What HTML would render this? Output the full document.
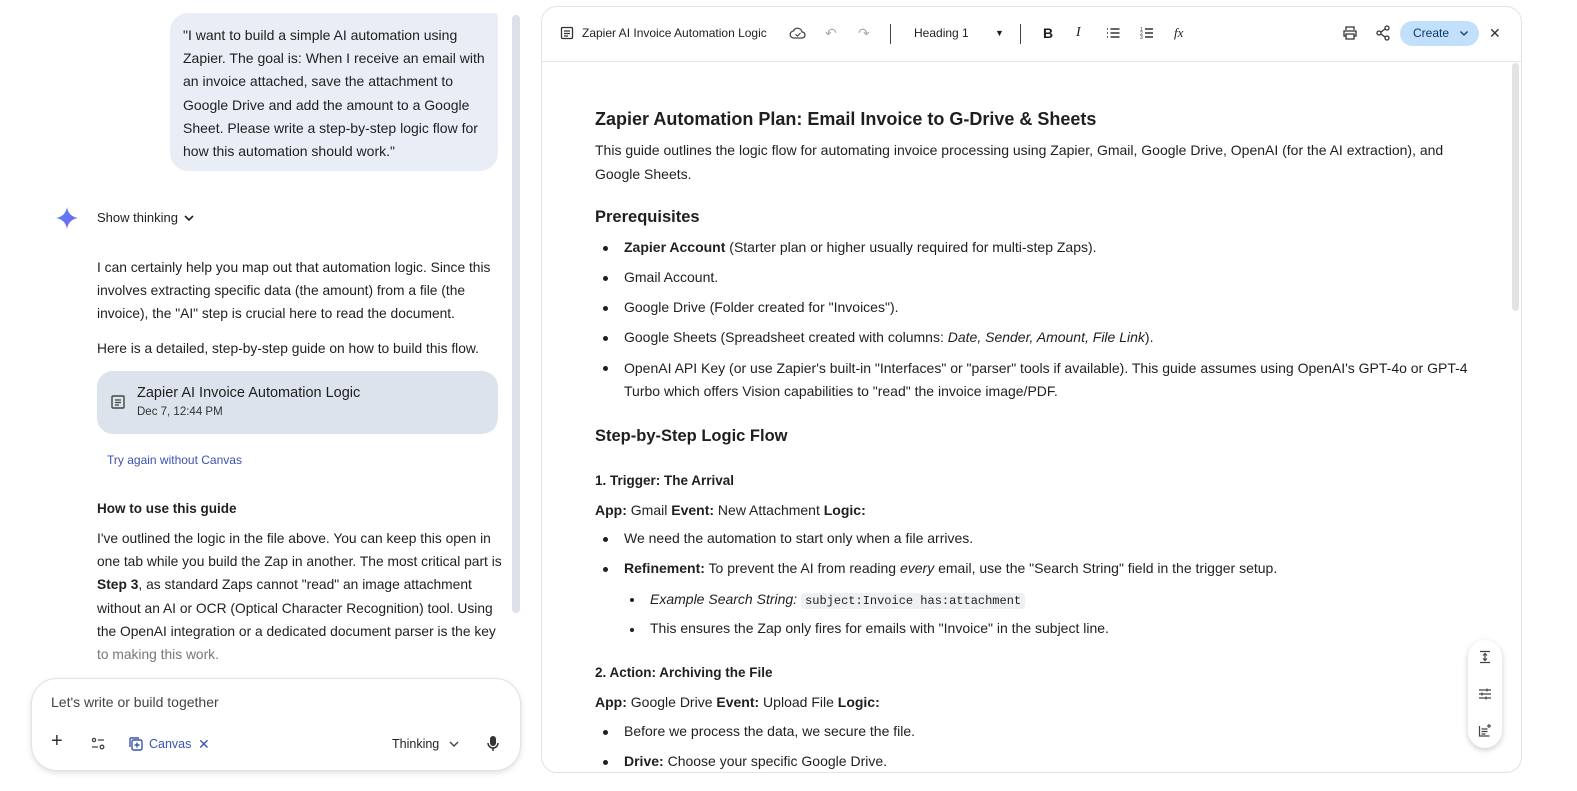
<!DOCTYPE html>
<html><head><meta charset="utf-8"><style>
*{margin:0;padding:0;box-sizing:border-box}
body{width:1577px;height:791px;background:#fff;font-family:"Liberation Sans",Arial,sans-serif;color:#1f1f1f;position:relative;overflow:hidden;font-size:14px}
.a{position:absolute;white-space:nowrap;line-height:20px}
.b{font-weight:bold}
.dot{position:absolute;width:5px;height:5px;border-radius:50%;background:#1f1f1f}
svg{position:absolute}
code{font-family:'Liberation Mono',monospace;font-size:12px;background:#eef0f3;padding:1px 4px;border-radius:4px;margin-left:4px}
</style></head><body>
<!-- user bubble -->
<div style="position:absolute;left:170px;top:13px;width:328px;height:158px;background:#e9edf6;border-radius:18px 4px 18px 18px"></div>
<div class="a" style="left:183px;top:24px;line-height:23.2px;font-size:14px">"I want to build a simple AI automation using<br>Zapier. The goal is: When I receive an email with<br>an invoice attached, save the attachment to<br>Google Drive and add the amount to a Google<br>Sheet. Please write a step-by-step logic flow for<br>how this automation should work."</div>
<!-- gemini star -->
<svg style="left:56px;top:207px" width="22" height="22" viewBox="0 0 22 22"><defs><linearGradient id="g" x1="0" y1="0" x2="1" y2="1"><stop offset="0" stop-color="#4f8cf7"/><stop offset="1" stop-color="#7b5cf0"/></linearGradient></defs><path d="M11 0C11.8 6 16 10.2 22 11C16 11.8 11.8 16 11 22C10.2 16 6 11.8 0 11C6 10.2 10.2 6 11 0Z" fill="url(#g)"/></svg>
<div class="a" style="left:97px;top:208px;font-size:13px">Show thinking</div>
<svg style="left:182px;top:211px" width="14" height="14" viewBox="0 0 14 14"><path d="M3 5l4 4 4-4" stroke="#1f1f1f" stroke-width="1.6" fill="none"/></svg>
<div class="a" style="left:97px;top:256px;line-height:23px;font-size:13.8px">I can certainly help you map out that automation logic. Since this<br>involves extracting specific data (the amount) from a file (the<br>invoice), the "AI" step is crucial here to read the document.</div>
<div class="a" style="left:97px;top:339px;font-size:13.8px">Here is a detailed, step-by-step guide on how to build this flow.</div>
<div style="position:absolute;left:97px;top:371px;width:401px;height:63px;background:#dde3ec;border-radius:16px"></div>
<svg style="left:110px;top:394px" width="16" height="16" viewBox="0 0 16 16"><rect x="2" y="2" width="12" height="12" rx="1" stroke="#444" stroke-width="1.4" fill="none"/><path d="M5 6h6M5 8.5h6M5 11h4" stroke="#444" stroke-width="1.3"/></svg>
<div class="a" style="left:137px;top:383px;font-size:14.5px">Zapier AI Invoice Automation Logic</div>
<div class="a" style="left:137px;top:402px;font-size:11.5px;color:#333">Dec 7, 12:44 PM</div>
<div class="a" style="left:107px;top:450px;font-size:12px;color:#3b52b4">Try again without Canvas</div>
<div class="a b" style="left:97px;top:499px;font-size:13.5px">How to use this guide</div>
<div class="a" style="left:97px;top:527px;line-height:23.2px;font-size:13.8px">I've outlined the logic in the file above. You can keep this open in<br>one tab while you build the Zap in another. The most critical part is<br><b>Step 3</b>, as standard Zaps cannot "read" an image attachment<br>without an AI or OCR (Optical Character Recognition) tool. Using<br>the OpenAI integration or a dedicated document parser is the key<br><span style="color:#777">to making this work.</span></div>
<div style="position:absolute;left:512px;top:15px;width:8px;height:598px;background:#dde1e9;border-radius:4px"></div>
<!-- input -->
<div style="position:absolute;left:31px;top:678px;width:490px;height:93px;border:1px solid #e2e2e2;border-radius:26px;background:#fff;box-shadow:0 2px 6px rgba(0,0,0,.12)"></div>
<div class="a" style="left:51px;top:692px;color:#444">Let's write or build together</div>
<div class="a" style="left:51px;top:731px;font-size:20px;color:#333">+</div>
<svg style="left:90px;top:736px" width="16" height="16" viewBox="0 0 16 16"><circle cx="4" cy="4" r="1.6" fill="none" stroke="#444" stroke-width="1.3"/><path d="M8 4h6M2 11h6" stroke="#444" stroke-width="1.3"/><circle cx="12" cy="11" r="1.8" fill="none" stroke="#444" stroke-width="1.3"/></svg>
<svg style="left:128px;top:736px" width="16" height="16" viewBox="0 0 16 16"><rect x="4" y="4" width="10" height="10" rx="1.5" fill="none" stroke="#3b52b4" stroke-width="1.4"/><path d="M2 11V3a1 1 0 0 1 1-1h8M9 6.5v5M6.5 9h5" stroke="#3b52b4" stroke-width="1.4" fill="none"/></svg>
<div class="a" style="left:149px;top:734px;font-size:12.5px;color:#3b52b4">Canvas</div>
<div class="a" style="left:198px;top:734px;font-size:14px;color:#3b52b4">✕</div>
<div class="a" style="left:392px;top:734px;font-size:12.5px">Thinking</div>
<svg style="left:447px;top:737px" width="14" height="14" viewBox="0 0 14 14"><path d="M3 5l4 4 4-4" stroke="#444" stroke-width="1.4" fill="none"/></svg>
<svg style="left:486px;top:735px" width="14" height="18" viewBox="0 0 14 18"><rect x="4" y="1" width="6" height="10" rx="3" fill="#333"/><path d="M2 8a5 5 0 0 0 10 0M7 13v3" stroke="#333" stroke-width="1.5" fill="none"/></svg>

<!-- right panel -->
<div style="position:absolute;left:541px;top:6px;width:981px;height:767px;border:1px solid #e3e3e3;border-radius:16px;background:#fff"></div>
<div style="position:absolute;left:542px;top:61px;width:979px;height:1px;background:#e6e6e6"></div>
<svg style="left:560px;top:26px" width="14" height="14" viewBox="0 0 14 14"><rect x="1.5" y="1.5" width="11" height="11" rx="1" stroke="#333" stroke-width="1.3" fill="none"/><path d="M4 5h6M4 7.5h6M4 10h4" stroke="#333" stroke-width="1.2"/></svg>
<div class="a" style="left:582px;top:23px;font-size:12px">Zapier AI Invoice Automation Logic</div>
<svg style="left:789px;top:25px" width="18" height="16" viewBox="0 0 18 16"><path d="M5 13h8a3 3 0 0 0 0-6 4.5 4.5 0 0 0-8.6-1A3.5 3.5 0 0 0 5 13z" fill="none" stroke="#444" stroke-width="1.3"/><path d="M6.5 9.5l2 1.5 3-3" stroke="#444" stroke-width="1.2" fill="none"/></svg>
<div class="a" style="left:825px;top:23px;color:#aaa;font-size:14px">↶</div>
<div class="a" style="left:858px;top:23px;color:#aaa;font-size:14px">↷</div>
<div style="position:absolute;left:890px;top:24px;width:1px;height:20px;background:#444"></div>
<div class="a" style="left:914px;top:23px;font-size:12px">Heading 1</div>
<div class="a" style="left:995px;top:23px;font-size:9px">▼</div>
<div style="position:absolute;left:1020px;top:24px;width:1px;height:20px;background:#444"></div>
<div class="a b" style="left:1043px;top:23px;font-size:14px">B</div>
<div class="a" style="left:1076px;top:23px;font-size:14px;font-style:italic;font-family:'Liberation Serif',serif">I</div>
<svg style="left:1106px;top:26px" width="14" height="14" viewBox="0 0 14 14"><path d="M1 3h1M1 7h1M1 11h1M4.5 3h9M4.5 7h9M4.5 11h9" stroke="#333" stroke-width="1.4"/></svg>
<svg style="left:1140px;top:26px" width="14" height="14" viewBox="0 0 14 14"><path d="M5 3h8M5 7h8M5 11h8" stroke="#333" stroke-width="1.4"/><text x="0" y="5" font-size="5" fill="#333">1</text><text x="0" y="9" font-size="5" fill="#333">2</text><text x="0" y="13" font-size="5" fill="#333">3</text></svg>
<div class="a" style="left:1174px;top:23px;font-size:13px;font-style:italic;font-family:'Liberation Serif',serif">fx</div>
<svg style="left:1342px;top:25px" width="16" height="16" viewBox="0 0 16 16"><path d="M4 5V2h8v3M4 11H2V6h12v5h-2M4 9h8v5H4z" fill="none" stroke="#333" stroke-width="1.3"/></svg>
<svg style="left:1375px;top:25px" width="16" height="16" viewBox="0 0 16 16"><circle cx="12" cy="3" r="2" fill="none" stroke="#333" stroke-width="1.3"/><circle cx="4" cy="8" r="2" fill="none" stroke="#333" stroke-width="1.3"/><circle cx="12" cy="13" r="2" fill="none" stroke="#333" stroke-width="1.3"/><path d="M6 7l4-3M6 9l4 3" stroke="#333" stroke-width="1.3"/></svg>
<div style="position:absolute;left:1400px;top:21px;width:79px;height:25px;background:#c2e0fb;border-radius:13px"></div>
<div class="a" style="left:1413px;top:23px;font-size:12px;color:#0b3a6b">Create</div>
<svg style="left:1458px;top:27px" width="12" height="12" viewBox="0 0 12 12"><path d="M2.5 4.5l3.5 3.5 3.5-3.5" stroke="#0b3a6b" stroke-width="1.3" fill="none"/></svg>
<div class="a" style="left:1489px;top:23px;font-size:14px;color:#333">✕</div>
<div style="position:absolute;left:1512px;top:63px;width:7px;height:248px;background:#e3e3e3;border-radius:4px"></div>

<div class="a b" style="left:595px;top:108px;font-size:18px;line-height:22px">Zapier Automation Plan: Email Invoice to G-Drive &amp; Sheets</div>
<div class="a" style="left:595px;top:138px;line-height:24px">This guide outlines the logic flow for automating invoice processing using Zapier, Gmail, Google Drive, OpenAI (for the AI extraction), and<br>Google Sheets.</div>
<div class="a b" style="left:595px;top:207px;font-size:16.5px">Prerequisites</div>
<div class="dot" style="left:603px;top:246px"></div><div class="a" style="left:624px;top:237px"><b style="font-weight:600">Zapier Account</b> (Starter plan or higher usually required for multi-step Zaps).</div>
<div class="dot" style="left:603px;top:276px"></div><div class="a" style="left:624px;top:267px">Gmail Account.</div>
<div class="dot" style="left:603px;top:306px"></div><div class="a" style="left:624px;top:297px">Google Drive (Folder created for "Invoices").</div>
<div class="dot" style="left:603px;top:336px"></div><div class="a" style="left:624px;top:327px">Google Sheets (Spreadsheet created with columns: <i>Date, Sender, Amount, File Link</i>).</div>
<div class="dot" style="left:603px;top:366px"></div><div class="a" style="left:624px;top:357px;line-height:23px">OpenAI API Key (or use Zapier's built-in "Interfaces" or "parser" tools if available). This guide assumes using OpenAI's GPT-4o or GPT-4<br>Turbo which offers Vision capabilities to "read" the invoice image/PDF.</div>
<div class="a b" style="left:595px;top:426px;font-size:16.5px">Step-by-Step Logic Flow</div>
<div class="a b" style="left:595px;top:471px;font-size:13.5px">1. Trigger: The Arrival</div>
<div class="a" style="left:595px;top:500px"><b>App:</b> Gmail <b>Event:</b> New Attachment <b>Logic:</b></div>
<div class="dot" style="left:603px;top:537px"></div><div class="a" style="left:624px;top:528px">We need the automation to start only when a file arrives.</div>
<div class="dot" style="left:603px;top:567px"></div><div class="a" style="left:624px;top:558px"><b>Refinement:</b> To prevent the AI from reading <i>every</i> email, use the "Search String" field in the trigger setup.</div>
<div class="dot" style="left:630px;top:598px;width:4px;height:4px"></div><div class="a" style="left:650px;top:589px"><i>Example Search String:</i><code>subject:Invoice has:attachment</code></div>
<div class="dot" style="left:630px;top:628px;width:4px;height:4px"></div><div class="a" style="left:650px;top:618px">This ensures the Zap only fires for emails with "Invoice" in the subject line.</div>
<div class="a b" style="left:595px;top:663px;font-size:13.5px">2. Action: Archiving the File</div>
<div class="a" style="left:595px;top:692px"><b>App:</b> Google Drive <b>Event:</b> Upload File <b>Logic:</b></div>
<div class="dot" style="left:603px;top:730px"></div><div class="a" style="left:624px;top:721px">Before we process the data, we secure the file.</div>
<div class="dot" style="left:603px;top:760px"></div><div class="a" style="left:624px;top:751px"><b>Drive:</b> Choose your specific Google Drive.</div>

<div style="position:absolute;left:1468px;top:640px;width:34px;height:108px;background:#fff;border-radius:17px;box-shadow:0 2px 6px rgba(0,0,0,.2)"></div>
<svg style="left:1478px;top:650px" width="14" height="14" viewBox="0 0 14 14"><path d="M2 1.5h10M2 12.5h10M7 4v6M5 5.5l2-2 2 2M5 8.5l2 2 2-2" stroke="#444" stroke-width="1.2" fill="none"/></svg>
<svg style="left:1478px;top:687px" width="14" height="14" viewBox="0 0 14 14"><path d="M1 3h12M1 7h12M1 11h12M9 1.5v3M4 5.5v3M8 9.5v3" stroke="#444" stroke-width="1.2"/></svg>
<svg style="left:1478px;top:723px" width="14" height="14" viewBox="0 0 14 14"><path d="M1.5 3v10h10M3.5 6h6M3.5 8.5h6M3.5 11h4M11 1v4M9 3h4" stroke="#444" stroke-width="1.2" fill="none"/></svg>
</body></html>
